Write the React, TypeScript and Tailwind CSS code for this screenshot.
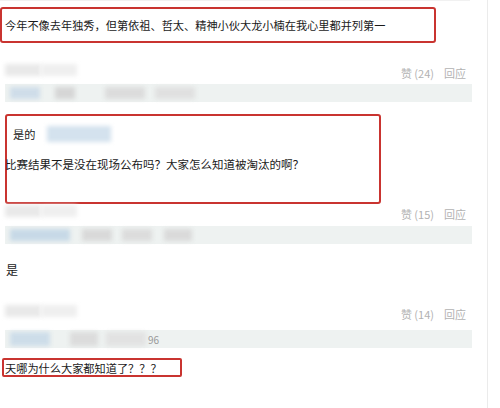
import React from "react";

const font = { fontFamily: "'Noto Sans CJK SC', 'Noto Sans', sans-serif" };

function Blur({ className }: { className: string }) {
  return <div className={`blur-[2px] ${className}`} />;
}

function MetaRow({ likes }: { likes: number }) {
  return (
    <div className="flex items-end justify-between h-[18px] pr-[21px]">
      <div className="ml-[5px] mb-[3px] w-[72px] h-[12px] flex gap-0">
        <Blur className="w-[36px] h-[12px] bg-[#e9e9e9]" />
        <Blur className="w-[36px] h-[12px] bg-[#efefef]" />
      </div>
      <div className="flex gap-[10px] text-[11px] text-[#b2b2b2] leading-[12px]">
        <span>赞 ({likes})</span>
        <span>回应</span>
      </div>
    </div>
  );
}

function QuoteBar({ children }: { children: React.ReactNode }) {
  return (
    <div className="ml-[5px] w-[467px] h-[18px] bg-[#eef2f1] flex items-center pl-[5px]">
      {children}
    </div>
  );
}

export default function App() {
  return (
    <div className="w-[500px] h-[408px] bg-white overflow-hidden flex text-[#1a1a1a]" style={font}>
      <div className="w-[488px] h-full border-r border-[#ebebeb] flex flex-col">
        <div className="w-[470px] h-px bg-[#f1f1f1]" />

        {/* comment 1 */}
        <div className="mt-[6px] w-[436px] h-[36px] border-2 border-[#c93430] rounded-[3px] flex items-center pl-[3px] text-[11.2px]">
          今年不像去年独秀，但第依祖、哲太、精神小伙大龙小楠在我心里都并列第一
        </div>

        <div className="mt-[18px]">
          <MetaRow likes={24} />
        </div>
        <div className="mt-[5px]">
          <QuoteBar>
            <Blur className="w-[30px] h-[12px] bg-[#cfdde9]" />
            <Blur className="ml-[15px] w-[20px] h-[12px] bg-[#d6d6d6]" />
            <Blur className="ml-[30px] w-[40px] h-[12px] bg-[#dcdcdc]" />
            <Blur className="ml-[10px] w-[40px] h-[12px] bg-[#e0e0e0]" />
          </QuoteBar>
        </div>

        {/* comment 2 */}
        <div className="mt-[12px] ml-[5px] w-[376px] h-[90px] border-2 border-[#c93430] rounded-[3px] flex flex-col">
          <div className="flex items-center mt-[9px] ml-[6px] h-[18px]">
            <span className="text-[11.2px]">是的</span>
            <Blur className="ml-[12px] w-[64px] h-[16px] bg-[#d4e2ee]" />
          </div>
          <div className="mt-[14px] -ml-[2px] text-[11.5px] leading-[14px]">
            比赛结果不是没在现场公布吗？大家怎么知道被淘汰的啊？
          </div>
        </div>

        <div className="-mt-[2px]">
          <MetaRow likes={15} />
        </div>
        <div className="mt-[6px]">
          <QuoteBar>
            <Blur className="w-[60px] h-[12px] bg-[#c7d9e7]" />
            <Blur className="ml-[12px] w-[30px] h-[12px] bg-[#d9d9d9]" />
            <Blur className="ml-[10px] w-[30px] h-[12px] bg-[#dcdcdc]" />
            <Blur className="ml-[12px] w-[28px] h-[12px] bg-[#dadada]" />
          </QuoteBar>
        </div>
        <div className="mt-[19px] ml-[6px] text-[12px] leading-[14px]">是</div>

        <div className="mt-[25px]">
          <MetaRow likes={14} />
        </div>
        <div className="mt-[10px]">
          <QuoteBar>
            <Blur className="w-[40px] h-[14px] bg-[#cddde9]" />
            <Blur className="ml-[20px] w-[28px] h-[14px] bg-[#dcdcdc]" />
            <Blur className="ml-[8px] w-[40px] h-[14px] bg-[#e2e2e2]" />
            <span className="ml-[2px] text-[10px] text-[#999]">96</span>
          </QuoteBar>
        </div>

        {/* comment 3 */}
        <div className="mt-[10px] ml-[2px] w-[180px] h-[19px] border-2 border-[#c93430] rounded-[2px] flex items-center pl-[1px] text-[11.2px] leading-[12px]">
          天哪为什么大家都知道了？？？
        </div>
      </div>
    </div>
  );
}
